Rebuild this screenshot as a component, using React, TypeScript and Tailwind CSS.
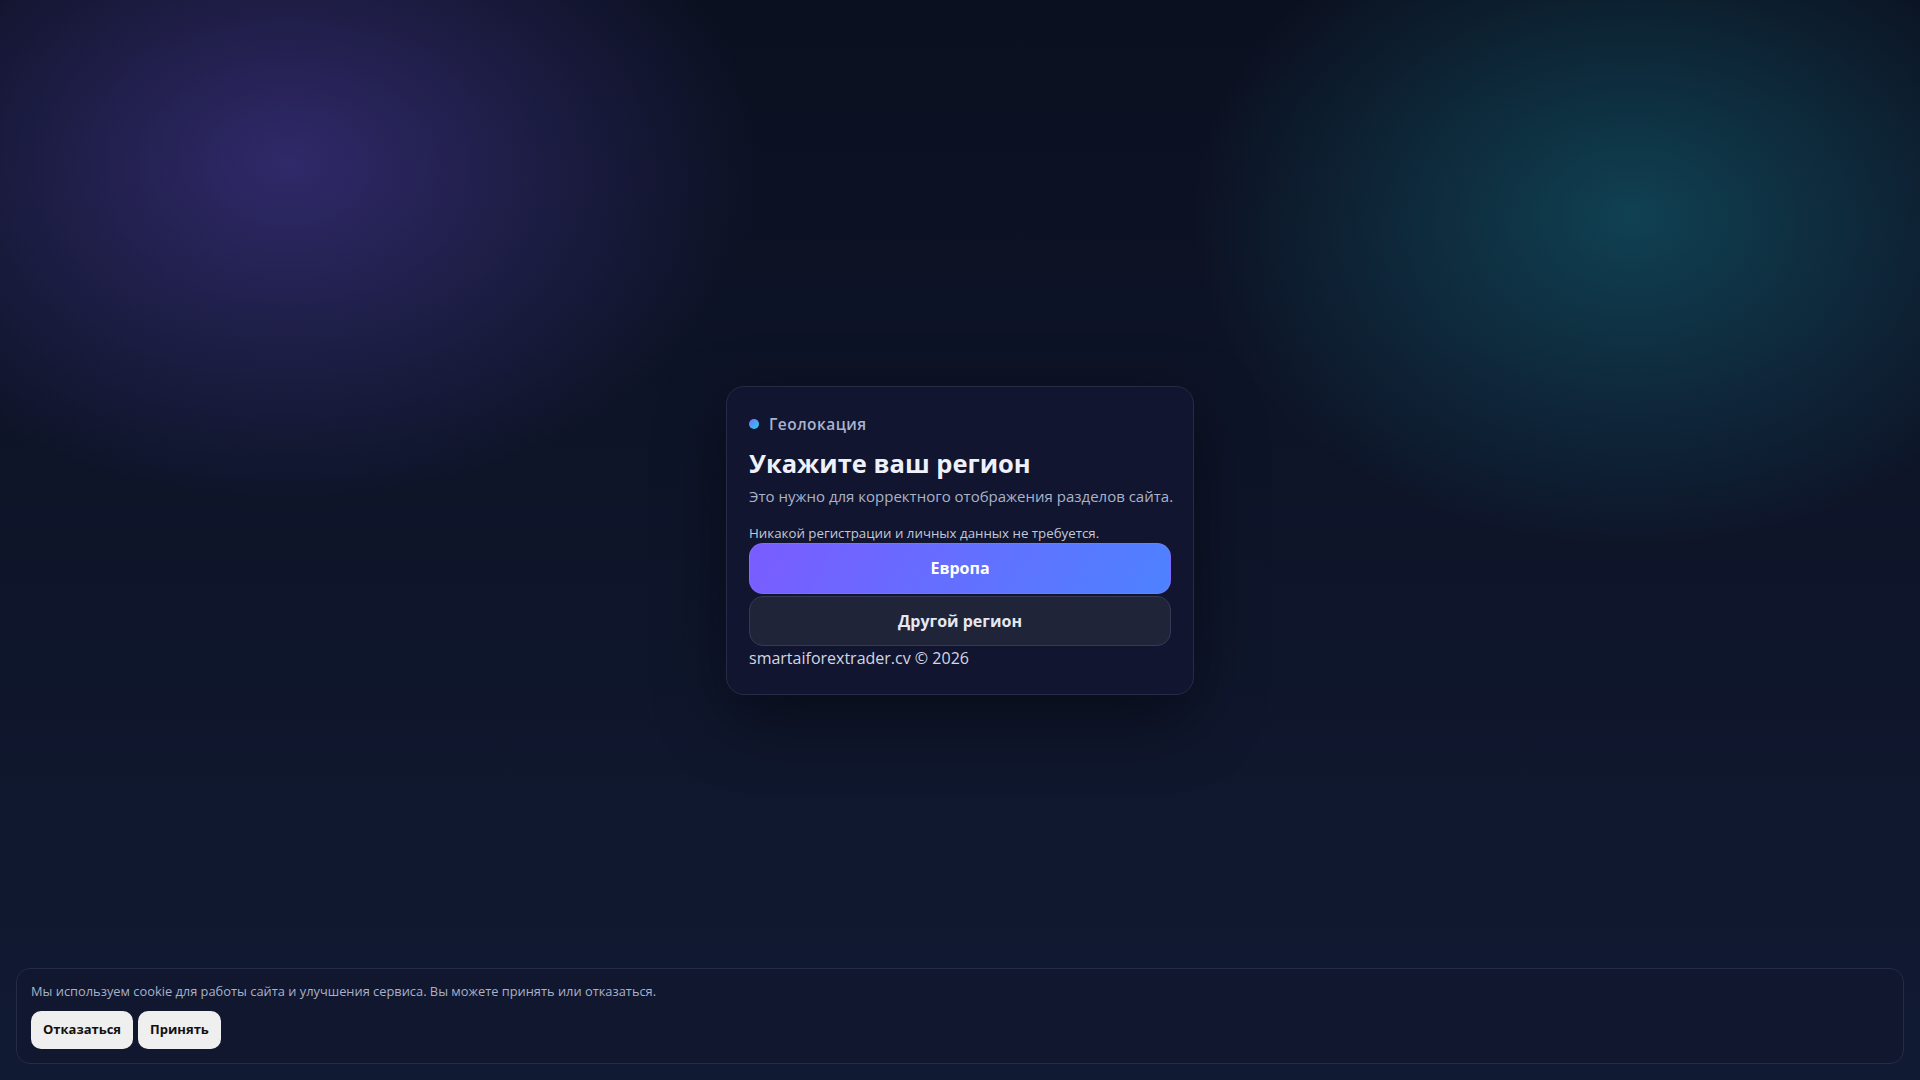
export default function App() {
  return (
    <div className="relative min-h-screen w-full overflow-hidden bg-[radial-gradient(ellipse_470px_340px_at_15%_15%,rgba(124,92,255,0.32),transparent),radial-gradient(ellipse_440px_330px_at_85%_20%,rgba(25,200,215,0.26),transparent),linear-gradient(180deg,#0b1020,#111a33)] font-['Open_Sans','Noto_Sans',sans-serif]">
      <main className="flex min-h-screen items-center justify-center">
        <section className="w-[468px] rounded-[18px] border border-[#262c47] bg-[#11152f] px-[22px] pb-[24px] pt-[26px] shadow-[0_24px_70px_rgba(0,0,0,0.45)]">
          <div className="flex items-center gap-[10px]">
            <span className="h-[10px] w-[10px] rounded-full bg-[linear-gradient(135deg,#7c6cff,#22d3ee)]" />
            <span className="text-[15.5px] font-semibold leading-[22px] tracking-[0.03em] text-[#a9b3cf]">Геолокация</span>
          </div>
          <h1 className="mt-[12px] text-[25.5px] font-bold leading-[32px] text-[#eef0fa]">Укажите ваш регион</h1>
          <p className="mt-[6px] whitespace-nowrap text-[15px] leading-[22px] text-[#aab3c9]">
            Это нужно для корректного отображения разделов сайта.
          </p>
          <p className="mt-[16px] text-[13.3px] leading-[20px] text-[#c3c9d6]">
            Никакой регистрации и личных данных не требуется.
          </p>
          <div className="flex flex-col gap-[2px]">
            <button className="h-[51px] w-full rounded-[14px] border border-[#8a7bff]/40 bg-[linear-gradient(120deg,#7a5cff,#4d82ff)] text-[16px] font-bold text-white">
              Европа
            </button>
            <button className="h-[50px] w-full rounded-[14px] border border-[#343a55] bg-[#1f2439] text-[16px] font-bold text-[#e6e8f1]">
              Другой регион
            </button>
          </div>
          <p className="text-[16px] leading-[24px] text-[#d3d7e2]">smartaiforextrader.cv © 2026</p>
        </section>
      </main>

      <div className="fixed bottom-4 left-4 right-4 flex flex-col gap-[10px] rounded-[14px] border border-[#252c46] bg-[#10172f] px-[14px] pb-[14px] pt-[12px]">
        <p className="text-[12.85px] leading-[20px] text-[#a8b1c7]">
          Мы используем cookie для работы сайта и улучшения сервиса. Вы можете принять или отказаться.
        </p>
        <div className="flex gap-[5px]">
          <button className="h-[38px] rounded-[10px] bg-[#efefef] px-3 text-[13px] font-bold text-[#111]">Отказаться</button>
          <button className="h-[38px] rounded-[10px] bg-[#efefef] px-3 text-[13px] font-bold text-[#111]">Принять</button>
        </div>
      </div>
    </div>
  );
}
